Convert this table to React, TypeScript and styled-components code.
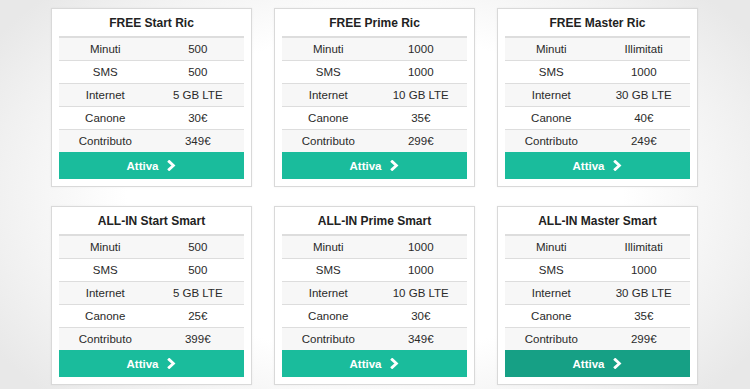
import React from "react";
import styled, { createGlobalStyle } from "styled-components";

const Global = createGlobalStyle`
  html, body { margin: 0; padding: 0; }
  body {
    width: 750px;
    height: 389px;
    overflow: hidden;
    font-family: "Liberation Sans", Arial, sans-serif;
    color: #333;
    background: radial-gradient(ellipse 60% 75% at 50% 50%, #ffffff 55%, #f0f0f0 85%, #e8e8e8 100%);
  }
`;

const Page = styled.div`
  display: grid;
  grid-template-columns: repeat(3, 201px);
  column-gap: 22px;
  row-gap: 19px;
  padding: 8px 0 0 51px;
`;

const Card = styled.div`
  background: #fff;
  border: 1px solid #d9d9d9;
  box-shadow: 0 0 2px rgba(0, 0, 0, 0.06);
  padding: 0 7px 7px;
  display: flex;
  flex-direction: column;
`;

const Title = styled.div`
  height: 26px;
  display: flex;
  align-items: center;
  justify-content: center;
  font-size: 12px;
  font-weight: bold;
  color: #222;
  padding-top: 1px;
`;

const Table = styled.div`
  border-top: 2px solid #dddddd;
  display: flex;
  flex-direction: column;
`;

const Row = styled.div<{ $striped: boolean }>`
  display: grid;
  grid-template-columns: 1fr 1fr;
  height: 22px;
  align-items: center;
  background: ${(p) => (p.$striped ? "#f7f7f7" : "#fff")};
  & + & {
    border-top: 1px solid #dddddd;
  }
`;

const Cell = styled.div`
  text-align: center;
  font-size: 11.5px;
  color: #2a2a2a;
`;

const Button = styled.div<{ $active?: boolean }>`
  height: 27px;
  background: ${(p) => (p.$active ? "#16a085" : "#1abc9c")};
  color: #fff;
  font-weight: bold;
  font-size: 11.5px;
  display: flex;
  align-items: center;
  justify-content: center;
  gap: 9px;
`;

const Chevron = () => (
  <svg width="9" height="11" viewBox="0 0 9 11" aria-hidden="true">
    <path
      d="M2.2 1.6 L6.4 5.5 L2.2 9.4"
      fill="none"
      stroke="#fff"
      strokeWidth="2.8"
      strokeLinecap="square"
      strokeLinejoin="miter"
    />
  </svg>
);

type Plan = {
  name: string;
  minuti: string;
  sms: string;
  internet: string;
  canone: string;
  contributo: string;
  active?: boolean;
};

const plans: Plan[] = [
  { name: "FREE Start Ric", minuti: "500", sms: "500", internet: "5 GB LTE", canone: "30€", contributo: "349€" },
  { name: "FREE Prime Ric", minuti: "1000", sms: "1000", internet: "10 GB LTE", canone: "35€", contributo: "299€" },
  { name: "FREE Master Ric", minuti: "Illimitati", sms: "1000", internet: "30 GB LTE", canone: "40€", contributo: "249€" },
  { name: "ALL-IN Start Smart", minuti: "500", sms: "500", internet: "5 GB LTE", canone: "25€", contributo: "399€" },
  { name: "ALL-IN Prime Smart", minuti: "1000", sms: "1000", internet: "10 GB LTE", canone: "30€", contributo: "349€" },
  { name: "ALL-IN Master Smart", minuti: "Illimitati", sms: "1000", internet: "30 GB LTE", canone: "35€", contributo: "299€", active: true },
];

export default function App() {
  return (
    <>
      <Global />
      <Page>
        {plans.map((p) => {
          const rows: [string, string][] = [
            ["Minuti", p.minuti],
            ["SMS", p.sms],
            ["Internet", p.internet],
            ["Canone", p.canone],
            ["Contributo", p.contributo],
          ];
          return (
            <Card key={p.name}>
              <Title>{p.name}</Title>
              <Table>
                {rows.map(([k, v], i) => (
                  <Row key={k} $striped={i % 2 === 0}>
                    <Cell>{k}</Cell>
                    <Cell>{v}</Cell>
                  </Row>
                ))}
              </Table>
              <Button $active={p.active}>
                <span>Attiva</span>
                <Chevron />
              </Button>
            </Card>
          );
        })}
      </Page>
    </>
  );
}
